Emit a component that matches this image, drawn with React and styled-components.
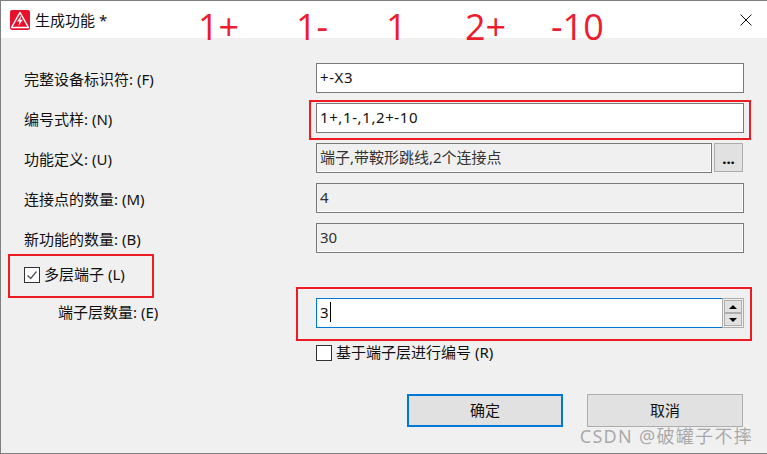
import styled, { createGlobalStyle } from "styled-components";

const GlobalStyle = createGlobalStyle`
  html, body {
    margin: 0;
    padding: 0;
    background: #f0f0f0;
  }
  * {
    box-sizing: border-box;
  }
`;

function AppIcon() {
  return (
    <svg width="20" height="20" viewBox="0 0 20 20">
      <rect width="20" height="20" rx="2" fill="#e8112d" />
      <path d="M10 2.5 L18.5 17.5 L1.5 17.5 Z" fill="none" stroke="#fff" strokeWidth="1.5" strokeLinejoin="round" />
      <path d="M11.2 5.5 L7 11.8 L9.6 11.3 L8.4 16 L13 9.6 L10.4 10.1 Z" fill="#fff" />
    </svg>
  );
}

function CheckMark() {
  return (
    <svg width="14" height="14" viewBox="0 0 14 14">
      <path d="M2.5 7.5 L5.7 10.5 L11.5 3.5" fill="none" stroke="#555" strokeWidth="1.3" />
    </svg>
  );
}

function App() {
  return (
    <>
      <GlobalStyle />
      <Dialog>
        <TitleBar>
          <AppIcon />
          <Title>生成功能 *</Title>
          <CloseIcon width="12" height="12" viewBox="0 0 12 12">
            <path d="M0.5 0.5 L11.5 11.5 M11.5 0.5 L0.5 11.5" stroke="#111" strokeWidth="1" />
          </CloseIcon>
          <Pin $left={197}>1+</Pin>
          <Pin $left={295}>1-</Pin>
          <Pin $left={385}>1</Pin>
          <Pin $left={464}>2+</Pin>
          <Pin $left={550}>-10</Pin>
        </TitleBar>

        <Form>
          <Row>
            <Label>完整设备标识符: (F)</Label>
            <Field $wide>+-X3</Field>
          </Row>
          <Row>
            <Label>编号式样: (N)</Label>
            <Field $wide>1+,1-,1,2+-10</Field>
          </Row>
          <Row>
            <Label>功能定义: (U)</Label>
            <FieldGroup>
              <Field $disabled>端子,带鞍形跳线,2个连接点</Field>
              <BrowseButton>...</BrowseButton>
            </FieldGroup>
          </Row>
          <Row>
            <Label>连接点的数量: (M)</Label>
            <Field $disabled>4</Field>
          </Row>
          <Row>
            <Label>新功能的数量: (B)</Label>
            <Field $disabled>30</Field>
          </Row>

          <CheckRow $top={4}>
            <Box>
              <CheckMark />
            </Box>
            <CheckText>多层端子 (L)</CheckText>
          </CheckRow>

          <SpinRow>
            <Label $indent={34}>端子层数量: (E)</Label>
            <Spinner>
              <SpinInput>
                3<Caret />
              </SpinInput>
              <SpinButtons>
                <SpinButton>
                  <Arrow $up />
                </SpinButton>
                <SpinButton>
                  <Arrow />
                </SpinButton>
              </SpinButtons>
            </Spinner>
          </SpinRow>

          <CheckRow $top={17} $left={292}>
            <Box />
            <CheckText>基于端子层进行编号 (R)</CheckText>
          </CheckRow>

          <Actions>
            <ActionButton $primary>确定</ActionButton>
            <ActionButton>取消</ActionButton>
          </Actions>
        </Form>

        <RedBox $x={309} $y={100} $w={442} $h={40} />
        <RedBox $x={8} $y={254} $w={146} $h={44} />
        <RedBox $x={296} $y={287} $w={456} $h={54} />
        <Watermark>CSDN @破罐子不摔</Watermark>
      </Dialog>
    </>
  );
}

const fontStack = `"Noto Sans", "Noto Sans CJK SC", sans-serif`;

const Dialog = styled.div`
  position: relative;
  width: 767px;
  height: 454px;
  overflow: hidden;
  background: #f0f0f0;
  border: 1px solid #7f7f7f;
  border-right: none;
  font-family: ${fontStack};
  font-size: 15px;
  color: #111;
`;

const TitleBar = styled.div`
  position: relative;
  display: flex;
  align-items: center;
  height: 37px;
  padding: 0 15px 0 9px;
  background: #fff;
`;

const Title = styled.span`
  margin-left: 5px;
  flex: 1;
  font-size: 15px;
`;

const CloseIcon = styled.svg`
  flex: none;
`;

const Pin = styled.span`
  position: absolute;
  left: ${(p) => p.$left}px;
  top: 4px;
  font-family: "Open Sans", sans-serif;
  font-size: 36px;
  line-height: 44px;
  color: #ed1c2e;
`;

const Form = styled.div`
  display: flex;
  flex-direction: column;
  padding: 25px 0 0 23px;
`;

const Row = styled.div`
  display: grid;
  grid-template-columns: 292px 428px;
  align-items: center;
  height: 30px;
  margin-bottom: 10px;
`;

const Label = styled.label`
  padding-left: ${(p) => p.$indent || 0}px;
  white-space: nowrap;
`;

const Field = styled.div`
  display: flex;
  align-items: center;
  flex: 1;
  height: 30px;
  padding: 0 3px 3px;
  border: 1px solid #7a7a7a;
  background: ${(p) => (p.$disabled ? "#f0f0f0" : "#fff")};
  box-shadow: ${(p) => (p.$disabled ? "inset -1px -1px 0 #fff" : "none")};
  color: ${(p) => (p.$disabled ? "#333" : "#111")};
  letter-spacing: ${(p) => (p.$wide ? "0.6px" : "0")};
  white-space: nowrap;
`;

const FieldGroup = styled.div`
  display: flex;
  gap: 2px;
  padding-right: 1px;
`;

const BrowseButton = styled.button`
  flex: none;
  width: 29px;
  height: 29px;
  padding: 0;
  border: 1px solid #adadad;
  background: #e1e1e1;
  font-family: ${fontStack};
  font-size: 15px;
  font-weight: 700;
  color: #000;
`;

const CheckRow = styled.div`
  display: flex;
  align-items: center;
  height: 16px;
  margin-top: ${(p) => p.$top}px;
  margin-left: ${(p) => p.$left || 0}px;
`;

const Box = styled.span`
  display: flex;
  align-items: center;
  justify-content: center;
  width: 16px;
  height: 16px;
  border: 1px solid #333;
  background: #fff;
`;

const CheckText = styled.span`
  margin-left: 4px;
  padding-bottom: 3px;
  white-space: nowrap;
`;

const SpinRow = styled(Row)`
  margin: 15px 0 0;

  ${Label} {
    padding-bottom: 4px;
  }
`;

const Spinner = styled.div`
  display: flex;
  height: 30px;
`;

const SpinInput = styled.div`
  display: flex;
  align-items: center;
  flex: 1;
  padding: 0 3px 3px;
  border: 1px solid #0078d7;
  border-right: none;
  background: #fff;
`;

const Caret = styled.span`
  width: 1px;
  height: 20px;
  margin-left: 1px;
  background: #000;
`;

const SpinButtons = styled.div`
  display: flex;
  flex-direction: column;
  width: 22px;
  padding: 1px;
  border: 1px solid #adadad;
  background: #f0f0f0;
`;

const SpinButton = styled.div`
  flex: 1;
  display: flex;
  align-items: center;
  justify-content: center;
  border: 1px solid #adadad;
  background: #e1e1e1;
`;

const Arrow = styled.span`
  width: 0;
  height: 0;
  border-left: 4px solid transparent;
  border-right: 4px solid transparent;
  border-${(p) => (p.$up ? "bottom" : "top")}: 4px solid #000;
`;

const Actions = styled.div`
  display: flex;
  justify-content: flex-end;
  gap: 24px;
  width: 719px;
  margin-top: 33px;
`;

const ActionButton = styled.button`
  width: 156px;
  height: 33px;
  padding: 0 0 2px;
  border: ${(p) => (p.$primary ? "2px solid #0078d7" : "1px solid #adadad")};
  background: #e1e1e1;
  font-family: ${fontStack};
  font-size: 15px;
  color: #111;
`;

const RedBox = styled.div`
  position: absolute;
  left: ${(p) => p.$x - 1}px;
  top: ${(p) => p.$y - 1}px;
  width: ${(p) => p.$w}px;
  height: ${(p) => p.$h}px;
  border: 2px solid #ed1c24;
  pointer-events: none;
`;

const Watermark = styled.div`
  position: absolute;
  right: 14px;
  bottom: 5px;
  font-family: ${fontStack};
  font-size: 18px;
  letter-spacing: 1.3px;
  color: rgba(120, 120, 120, 0.6);
  white-space: nowrap;
`;

export default App;
